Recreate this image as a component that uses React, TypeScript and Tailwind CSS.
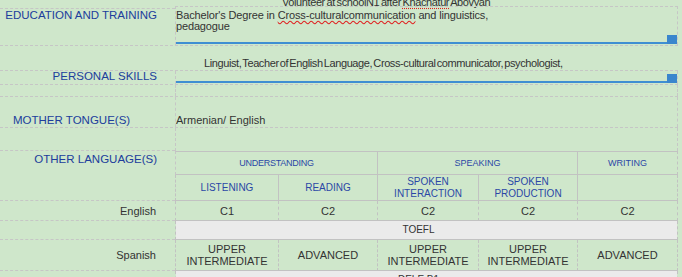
import React from "react";

const BLUE = "text-[#203d9c]";

export default function App() {
  return (
    <div className="w-[682px] h-[277px] overflow-hidden bg-[#cfe7cb] font-['Liberation_Sans',Arial,sans-serif] text-[#333333]">
      <div className="w-[678px]">
        {/* clipped line above */}
        <div className="-mt-[4px] h-[10px] pl-[282px] text-[11px] leading-[12px] tracking-[-0.4px] [word-spacing:-1px] whitespace-nowrap">
          Volunteer at schoolN1 after{" "}
          <span className="underline decoration-dotted decoration-[#e02020] underline-offset-2">Khachatur</span> Abovyan
        </div>

        {/* Education */}
        <div className="flex h-[40px] border-b border-dashed border-[#c6c6c6]">
          <div className="w-[175px] shrink-0 pt-[2px]">
            <div className={`h-full border-t border-dashed border-[#c6c6c6] pr-[18px] text-right text-[11.5px] leading-[12px] whitespace-nowrap ${BLUE}`}>
              EDUCATION AND TRAINING
            </div>
          </div>
          <div className="flex flex-1 flex-col border-t border-l border-r border-dashed border-[#c6c6c6] pt-[3px] pb-[1px]">
            <div className="text-[11px] leading-[11px] tracking-[-0.15px] whitespace-nowrap">
              Bachelor's Degree in{" "}
              <span className="underline decoration-wavy decoration-[#e02020] underline-offset-[1px]">Cross-culturalcommunication</span>{" "}
              and linguistics,
              <br />
              pedagogue
            </div>
            <div className="mt-auto flex items-end">
              <div className="h-[2px] flex-1 bg-[#3f8fd2]" />
              <div className="h-[9px] w-[10px] bg-[#3a86cd]" />
            </div>
          </div>
        </div>

        {/* Linguist line */}
        <div className="h-[25px] border-b border-dashed border-[#c6c6c6] pt-[11px] pl-[204px] text-[11px] leading-[12px] tracking-[-0.4px] [word-spacing:-1.5px] whitespace-nowrap">
          Linguist, Teacher of English Language, Cross-cultural communicator, psychologist,
        </div>

        {/* Personal skills */}
        <div className="flex h-[14px] border-b border-dashed border-[#c6c6c6]">
          <div className={`w-[175px] shrink-0 pr-[18px] text-right text-[11.5px] leading-[11px] whitespace-nowrap ${BLUE}`}>
            PERSONAL SKILLS
          </div>
          <div className="flex flex-1 items-end border-l border-r border-dashed border-[#c6c6c6] pb-[1px]">
            <div className="h-[2px] flex-1 bg-[#3f8fd2]" />
            <div className="h-[9px] w-[10px] bg-[#3a86cd]" />
          </div>
        </div>

        {/* spacer row */}
        <div className="flex h-[12px] border-b border-dashed border-[#c6c6c6]">
          <div className="w-[175px] shrink-0" />
          <div className="flex-1 border-l border-r border-dashed border-[#c6c6c6]" />
        </div>

        {/* Mother tongue */}
        <div className="flex h-[31px] border-b border-dashed border-[#c6c6c6]">
          <div className={`flex w-[175px] shrink-0 items-end pl-[13px] pb-[1px] text-[11.5px] leading-[12px] whitespace-nowrap ${BLUE}`}>
            MOTHER TONGUE(S)
          </div>
          <div className="flex flex-1 items-end border-l border-r border-dashed border-[#c6c6c6] pb-[1px] text-[11px] leading-[12px]">
            Armenian/ English
          </div>
        </div>

        {/* empty row */}
        <div className="flex h-[23px]">
          <div className="w-[175px] shrink-0 border-b border-dashed border-[#c6c6c6]" />
          <div className="flex-1 border-l border-r border-dashed border-[#c6c6c6]" />
        </div>

        {/* Languages grid */}
        <div className="grid grid-cols-[175px_103px_99px_101px_99px_101px] grid-rows-[24px_26px_20px_19px_31px_20px] text-center">
          <div className={`row-span-2 border-b border-dashed border-[#c6c6c6] pt-[2px] pr-[18px] text-right text-[11.5px] leading-[12px] whitespace-nowrap ${BLUE}`}>
            OTHER LANGUAGE(S)
          </div>
          <div className="col-span-2 flex items-center justify-center border-t border-b border-l border-[#c2c2c2] [border-left-style:dashed] [border-left-color:#c6c6c6] text-[9px] leading-[10px] tracking-[-0.25px] text-[#2b47a6]">
            UNDERSTANDING
          </div>
          <div className="col-span-2 flex items-center justify-center border-t border-b border-l border-[#c2c2c2] text-[9px] leading-[10px] text-[#2b47a6]">
            SPEAKING
          </div>
          <div className="flex items-center justify-center border-t border-b border-l border-r border-[#c2c2c2] [border-right-style:dashed] text-[9px] leading-[10px] text-[#2b47a6]">
            WRITING
          </div>

          <div className="flex items-center justify-center border-b border-l border-[#c2c2c2] [border-left-style:dashed] text-[10px] leading-[12px] text-[#2b47a6]">
            LISTENING
          </div>
          <div className="flex items-center justify-center border-b border-l border-[#c2c2c2] text-[10px] leading-[12px] text-[#2b47a6]">
            READING
          </div>
          <div className="flex items-center justify-center border-b border-l border-[#c2c2c2] text-[10px] leading-[12px] text-[#2b47a6]">
            SPOKEN
            <br />
            INTERACTION
          </div>
          <div className="flex items-center justify-center border-b border-l border-[#c2c2c2] text-[10px] leading-[12px] text-[#2b47a6]">
            SPOKEN
            <br />
            PRODUCTION
          </div>
          <div className="border-b border-l border-r border-[#c2c2c2] [border-right-style:dashed]" />

          {/* English */}
          <div className="flex items-center justify-end border-b border-dashed border-[#c6c6c6] pr-[19px] text-[11px] leading-[12px]">
            English
          </div>
          {["C1", "C2", "C2", "C2"].map((v, i) => (
            <div
              key={i}
              className="flex items-center justify-center border-b border-l border-[#c2c2c2] [border-left-style:dashed] text-[11px] leading-[12px]"
            >
              {v}
            </div>
          ))}
          <div className="flex items-center justify-center border-b border-l border-r border-[#c2c2c2] [border-left-style:dashed] [border-right-style:dashed] text-[11px] leading-[12px]">
            C2
          </div>

          {/* TOEFL */}
          <div className="border-b border-dashed border-[#c6c6c6]" />
          <div className="col-span-5 flex items-center justify-center border-b border-l border-r border-[#c2c2c2] [border-left-style:dashed] [border-right-style:dashed] bg-[#ebebeb] bg-clip-padding pr-[16px] text-[10px] leading-[12px]">
            TOEFL
          </div>

          {/* Spanish */}
          <div className="flex items-center justify-end border-b border-dashed border-[#c6c6c6] pr-[19px] text-[11px] leading-[12px]">
            Spanish
          </div>
          {["UPPER\nINTERMEDIATE", "ADVANCED", "UPPER\nINTERMEDIATE", "UPPER\nINTERMEDIATE"].map((v, i) => (
            <div
              key={i}
              className="flex items-center justify-center whitespace-pre-line border-b border-l border-[#c2c2c2] [border-left-style:dashed] text-[11px] leading-[12.5px]"
            >
              {v}
            </div>
          ))}
          <div className="flex items-center justify-center border-b border-l border-r border-[#c2c2c2] [border-left-style:dashed] [border-right-style:dashed] text-[11px] leading-[12px]">
            ADVANCED
          </div>

          {/* DELE */}
          <div />
          <div className="col-span-5 flex items-start justify-center border-l border-r border-[#c2c2c2] [border-left-style:dashed] [border-right-style:dashed] bg-[#ebebeb] bg-clip-padding pt-[3px] pr-[16px] text-[10px] leading-[12px]">
            DELE B1
          </div>
        </div>
      </div>
    </div>
  );
}
